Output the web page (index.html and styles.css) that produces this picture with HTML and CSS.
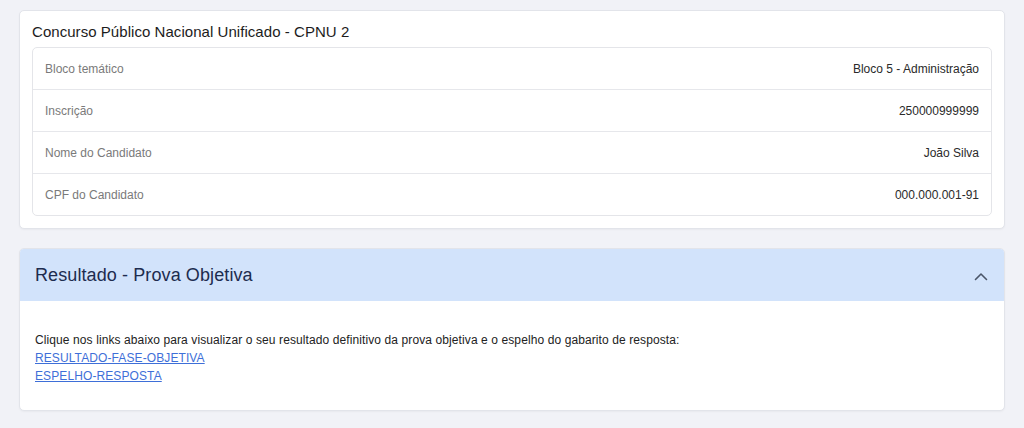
FILE: index.html
```html
<!DOCTYPE html>
<html lang="pt-BR">
<head>
<meta charset="utf-8">
<link rel="stylesheet" href="styles.css">
</head>
<body>
<div class="page">
  <section class="card">
    <h2 class="card-title">Concurso Público Nacional Unificado - CPNU 2</h2>
    <ul class="info-list">
      <li class="info-row"><span class="label">Bloco temático</span><span class="value">Bloco 5 - Administração</span></li>
      <li class="info-row"><span class="label">Inscrição</span><span class="value">250000999999</span></li>
      <li class="info-row"><span class="label">Nome do Candidato</span><span class="value">João Silva</span></li>
      <li class="info-row"><span class="label">CPF do Candidato</span><span class="value">000.000.001-91</span></li>
    </ul>
  </section>

  <section class="accordion">
    <div class="acc-header">
      <h3 class="acc-title">Resultado - Prova Objetiva</h3>
      <svg class="chevron" width="14" height="9" viewBox="0 0 14 9" aria-hidden="true">
        <path d="M1.5 7.5 L7 2 L12.5 7.5" fill="none" stroke="#4a5568" stroke-width="1.6" stroke-linecap="round" stroke-linejoin="round"/>
      </svg>
    </div>
    <div class="acc-body">
      <p class="line intro">Clique nos links abaixo para visualizar o seu resultado definitivo da prova objetiva e o espelho do gabarito de resposta:</p>
      <a class="line link" href="#">RESULTADO-FASE-OBJETIVA</a>
      <a class="line link" href="#">ESPELHO-RESPOSTA</a>
    </div>
  </section>
</div>
</body>
</html>
```

FILE: styles.css
```css
html, body {
  margin: 0;
  padding: 0;
  background: #f1f2f7;
  font-family: "Liberation Sans", Arial, Helvetica, sans-serif;
}

.page {
  padding: 10px 19px;
  display: flex;
  flex-direction: column;
  gap: 19px;
}

.card {
  background: #fff;
  border: 1px solid #e2e4ea;
  border-radius: 5px;
  padding: 11px 12px 12px 12px;
  box-shadow: 0 1px 2px rgba(0, 0, 0, 0.04);
}

.card-title {
  margin: 0 0 5px 0;
  font-size: 15px;
  line-height: 20px;
  font-weight: normal;
  color: #1c1c1c;
  letter-spacing: 0.05px;
}

.info-list {
  list-style: none;
  margin: 0;
  padding: 0;
  border: 1px solid #e4e5e9;
  border-radius: 5px;
}

.info-row {
  display: flex;
  justify-content: space-between;
  align-items: center;
  height: 41px;
  padding: 0 12px;
  font-size: 12px;
}

.info-row + .info-row {
  border-top: 1px solid #e6e7eb;
}

.label {
  color: #7a7a7a;
}

.value {
  color: #2a2a2a;
}

.accordion {
  background: #fff;
  border: 1px solid #e2e4ea;
  border-radius: 5px;
  overflow: hidden;
  box-shadow: 0 1px 2px rgba(0, 0, 0, 0.04);
}

.acc-header {
  display: flex;
  align-items: center;
  justify-content: space-between;
  height: 52px;
  padding: 0 16px 0 15px;
  background: #d2e3fb;
}

.acc-title {
  margin: 0;
  font-size: 18px;
  font-weight: normal;
  color: #1d2c4f;
  letter-spacing: 0.1px;
}

.chevron {
  display: block;
  margin-top: 2px;
}

.acc-body {
  padding: 30px 15px 25px 15px;
  display: flex;
  flex-direction: column;
  align-items: flex-start;
}

.line {
  margin: 0;
  font-size: 12px;
  line-height: 18px;
  color: #222;
  letter-spacing: 0.1px;
}

.link {
  color: #3e6fd8;
  text-decoration: underline;
}
```
